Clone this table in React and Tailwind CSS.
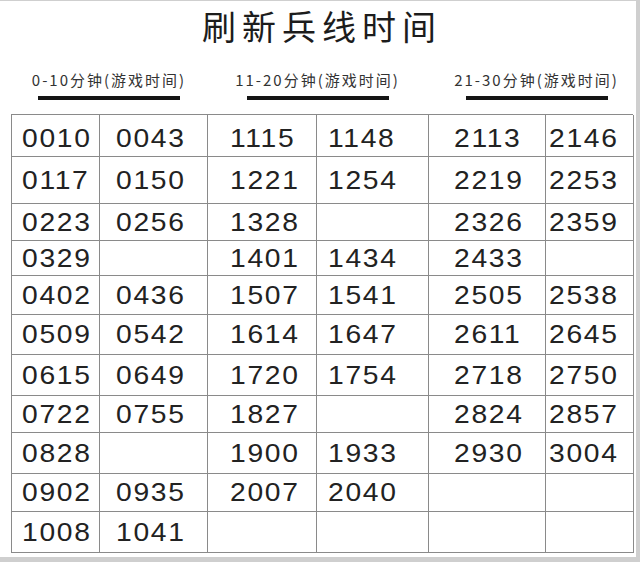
import React from "react";

const rows = [
  ["0010", "0043", "1115", "1148", "2113", "2146"],
  ["0117", "0150", "1221", "1254", "2219", "2253"],
  ["0223", "0256", "1328", "", "2326", "2359"],
  ["0329", "", "1401", "1434", "2433", ""],
  ["0402", "0436", "1507", "1541", "2505", "2538"],
  ["0509", "0542", "1614", "1647", "2611", "2645"],
  ["0615", "0649", "1720", "1754", "2718", "2750"],
  ["0722", "0755", "1827", "", "2824", "2857"],
  ["0828", "", "1900", "1933", "2930", "3004"],
  ["0902", "0935", "2007", "2040", "", ""],
  ["1008", "1041", "", "", "", ""],
];

// left padding per column, the print is not centred in its cells
const colPad = ["pl-[10px]", "pl-[16px]", "pl-[22px]", "pl-[11px]", "pl-[25px]", "pl-[3px]"];

const groups = [
  { label: "0-10", shift: "" },
  { label: "11-20", shift: "" },
  { label: "21-30", shift: "pl-[12px]" },
];

function Heading({ label, shift }) {
  return (
    <div className={`flex flex-col items-center ${shift}`}>
      <div className="h-[20px] leading-[20px] text-[15px] tracking-[2px] text-[#333] whitespace-nowrap">
        {label}分钟(游戏时间)
      </div>
      <div className="mt-[6px] h-[4px] w-[142px] bg-[#151515]" />
    </div>
  );
}

export default function App() {
  return (
    <div
      className="w-[640px] h-[562px] bg-white border-t border-r-[4px] border-b-[5px] border-[#cfcfcf] overflow-hidden"
      style={{ fontFamily: '"Noto Sans CJK SC", "Noto Sans", sans-serif' }}
    >
      {/* title */}
      <div className="h-[48px] flex items-center justify-center pl-[8px] text-[34px] tracking-[6px] text-[#1c1c1c]">
        刷新兵线时间
      </div>

      {/* group headings */}
      <div className="ml-[11px] grid grid-cols-[196px_221px_205px] pt-[21px] pb-[14px]">
        {groups.map((g) => (
          <Heading key={g.label} label={g.label} shift={g.shift} />
        ))}
      </div>

      {/* time table */}
      <div
        className="ml-[11px] w-[622px] grid grid-cols-[88px_108px_109px_112px_117px_88px] grid-rows-[42px_47px_37px_35px_39px_40px_41px_37px_41px_38px_41px] border-l border-t border-[#8a8a8a] text-[#222]"
        style={{ fontFamily: '"Liberation Sans", Arial, sans-serif' }}
      >
        {rows.map((row, r) =>
          row.map((t, c) => (
            <div
              key={`${r}-${c}`}
              className={`flex items-center border-r border-b border-[#8a8a8a] ${colPad[c]} ${r === 0 ? "pt-[5px]" : ""}`}
            >
              <span className="inline-block origin-left scale-x-[1.13] text-[25px] tracking-[1.5px] leading-none">
                {t}
              </span>
            </div>
          ))
        )}
      </div>
    </div>
  );
}
